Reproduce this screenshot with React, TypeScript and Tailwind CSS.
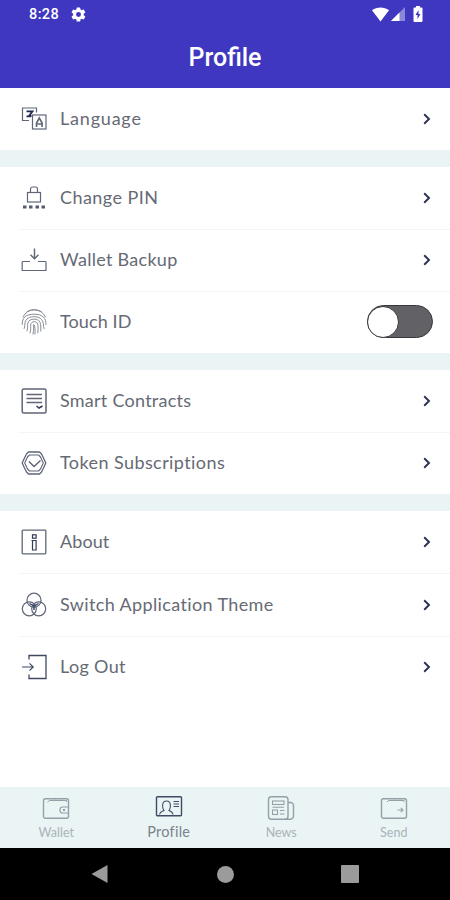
import type { ReactNode } from 'react';

type IconProps = { className?: string; children?: ReactNode };

function Icon({ className, children }: IconProps) {
  return (
    <svg
      xmlns="http://www.w3.org/2000/svg"
      viewBox="0 0 26 26"
      fill="none"
      stroke="currentColor"
      strokeWidth={1.2}
      className={className ?? 'h-[26px] w-[26px] flex-none text-[#5f6677]'}
    >
      {children}
    </svg>
  );
}

function IconLanguage() {
  return (
    <Icon>
      <path d="M8 14.500H1.500V2H15.500V6.500M5 14.500h3" />
      <rect x="11.5" y="9" width="13.5" height="14" />
      <path d="M5.500 5.300h6l-3.700 5M5.500 10.300h2.300l2.700-.3" stroke="#1f2850" strokeWidth={1.8} />
      <path d="M15.500 21v-4l2.800-5 2.800 5v4M15.500 18h5.500" strokeWidth={1.6} />
    </Icon>
  );
}

function IconPin() {
  return (
    <Icon>
      <rect x="6.5" y="7.5" width="13" height="9.5" />
      <path d="M9.500 7.500V4a2 2 0 0 1 2-2h3a2 2 0 0 1 2 2v3.500" />
      <path d="M2 22h3.500M8 22h3.500M14.500 22H18M20.500 22H24" stroke="#555b6a" strokeWidth={3} />
    </Icon>
  );
}

function IconBackup() {
  return (
    <Icon>
      <path d="M9 14.500H2a.8.8 0 0 0-.8.8v8.200h23.800v-8.200a.8.8 0 0 0-.8-.8H17" />
      <path d="M13.500 1.500v10M9.500 7.700l4 4 4-4" strokeWidth={1.4} />
    </Icon>
  );
}

function IconTouch() {
  return (
    <Icon className="h-[26px] w-[26px] flex-none text-[#878c96]">
      <g strokeWidth={1} strokeLinecap="round">
        <path d="M6 2.700a14 14 0 0 1 14.500 0" />
        <path d="M2 8a12.500 12.500 0 0 1 22.500 0" />
        <path d="M1.200 15.500C1 8.500 5 5.200 13.200 5.200S25.300 9 25 15.500" />
        <path d="M3.200 19.500c1-2 .4-4 .8-6 .9-3.800 4.300-5.800 9.200-5.800s8.500 2.500 9.100 7c.2 2 .2 3.500.8 5" />
        <path d="M6 22c1.200-3 .3-5.500.8-8 .6-2.500 3.200-3.900 6.400-3.900 3.800 0 6.100 2 6.400 5.500.2 2.500.4 4.500.2 6.500" />
        <path d="M9 24c1.200-3 .5-6 .7-8.200.2-1.900 1.600-3.100 3.500-3.100 2.300 0 3.700 1.500 3.800 3.800.1 2.700.2 5-.2 7.300" />
        <path d="M12 25c.9-3.500.5-6 .7-9.500 1.600 2 1.500 6 1.200 9.500" />
      </g>
    </Icon>
  );
}

function IconContract() {
  return (
    <Icon>
      <rect x="1.200" y="1" width="23.800" height="24" rx="1.500" strokeWidth={1.5} />
      <path d="M5.500 6.500h15.500M5.500 10.500h15.500M5.500 14.500h15.500" strokeWidth={1.5} />
      <path d="M15.500 18l2.500 2 3.500-2" stroke="#353c50" strokeWidth={1.6} />
    </Icon>
  );
}

function IconToken() {
  return (
    <Icon>
      <g strokeLinejoin="round">
        <path d="M7.500 2h11l2 2 2 4 2.300 5-2.300 5-2 4-2 2h-11l-2-2-2-4-2.300-5 2.300-5 2-4z" strokeWidth={1.3} />
        <path d="M8.500 5h9l2 2 2.800 6-2.800 6-2 2h-9l-2-2-2.800-6 2.800-6z" strokeWidth={1.1} />
      </g>
      <path d="M8 11.500l5 5 6.500-6" strokeWidth={1.5} />
    </Icon>
  );
}

function IconAbout() {
  return (
    <Icon>
      <rect x="1.200" y="1.200" width="23.600" height="23.600" rx="0.800" strokeWidth={1.3} />
      <g stroke="#333b55">
        <rect x="11.500" y="5.800" width="3.600" height="3.400" />
        <path d="M10.500 11.500h4.600v9.500h-3.600v-9.500" />
      </g>
    </Icon>
  );
}

function IconTheme() {
  return (
    <Icon>
      <circle cx="13" cy="8.200" r="7" />
      <circle cx="8.300" cy="16.800" r="7" />
      <circle cx="17.700" cy="16.800" r="7" />
      <path d="M8.500 11.500L13 14l4.500-2.500M13 14v4" stroke="#35406b" strokeWidth={1.4} />
    </Icon>
  );
}

function IconLogout() {
  return (
    <Icon className="h-[26px] w-[26px] flex-none text-[#414961]">
      <path d="M8 5.500V1.500h17v23H8v-4" strokeWidth={1.3} />
      <path d="M1 13h11M8.500 9.300l3.700 3.700-3.700 3.700" />
    </Icon>
  );
}

function Chevron() {
  return (
    <svg viewBox="0 0 10 14" fill="none" className="mr-px h-3.5 w-2.5 flex-none">
      <path d="M2.200 2.300L7 7l-4.800 4.700" stroke="#2a3052" strokeWidth={1.9} />
    </svg>
  );
}

type Item = { label: string; icon: ReactNode; tracking: string; toggle?: boolean };

const groups: Item[][] = [
  [{ label: 'Language', icon: <IconLanguage />, tracking: 'tracking-[0.8px]' }],
  [
    { label: 'Change PIN', icon: <IconPin />, tracking: 'tracking-[0.45px]' },
    { label: 'Wallet Backup', icon: <IconBackup />, tracking: 'tracking-[0.28px]' },
    { label: 'Touch ID', icon: <IconTouch />, tracking: 'tracking-[0.1px]', toggle: true },
  ],
  [
    { label: 'Smart Contracts', icon: <IconContract />, tracking: 'tracking-[0.25px]' },
    { label: 'Token Subscriptions', icon: <IconToken />, tracking: 'tracking-[0.42px]' },
  ],
  [
    { label: 'About', icon: <IconAbout />, tracking: 'tracking-[0.1px]' },
    { label: 'Switch Application Theme', icon: <IconTheme />, tracking: 'tracking-[0.37px]' },
    { label: 'Log Out', icon: <IconLogout />, tracking: 'tracking-[0.35px]' },
  ],
];

function TabIcon({ children }: { children: ReactNode }) {
  return (
    <svg viewBox="0 0 28 26" fill="none" stroke="currentColor" strokeWidth={1.4} className="h-[26px] w-7">
      {children}
    </svg>
  );
}

const tabs = [
  {
    label: 'Wallet',
    active: false,
    icon: (
      <TabIcon>
        <rect x="1.500" y="4.800" width="25" height="19.500" rx="2" />
        <path d="M5.500 8l2-1.500h17V8M13 5.500v1.500M20 5.500v1.500" strokeWidth={1} />
        <path d="M26.500 13h-6a2.500 2.500 0 0 0-2.500 2.500v1a2.500 2.500 0 0 0 2.500 2.500h6" strokeWidth={1.2} />
        <path d="M21 16h2" strokeWidth={1.8} />
      </TabIcon>
    ),
  },
  {
    label: 'Profile',
    active: true,
    icon: (
      <TabIcon>
        <rect x="1.500" y="2.700" width="25" height="19" rx="1" />
        <path
          d="M4.500 20.500c.5-3 2-3 4.500-4-2-2.500-2.500-9.500 2.500-9.500s4.500 7 2.500 9.500c2.500 1 3.500 1.500 4 4"
          strokeWidth={1.1}
        />
        <path d="M18.500 7.500h5.500M18.500 10h5.500M18.500 12.500h5.500" strokeWidth={1.1} />
      </TabIcon>
    ),
  },
  {
    label: 'News',
    active: false,
    icon: (
      <TabIcon>
        <rect x="1.500" y="2.700" width="19.500" height="22.500" rx="3" />
        <path d="M21 8.500h2.500a3 3 0 0 1 3 3v10.700a3 3 0 0 1-3 3H18" />
        <rect x="5.500" y="7" width="11.500" height="3.500" strokeWidth={1.1} />
        <rect x="5.500" y="16" width="5" height="4.500" strokeWidth={1.1} />
        <path d="M5.500 13.300H17M13 16.500h4.500M13 20h4.500" strokeWidth={1.1} />
      </TabIcon>
    ),
  },
  {
    label: 'Send',
    active: false,
    icon: (
      <TabIcon>
        <rect x="1.500" y="4.800" width="25" height="19.500" rx="2" />
        <path d="M7 8l1.500-1.500h15.500V8M14 5.500v1.500M20 5.500v1.500" strokeWidth={1} />
        <path d="M17.500 16h5.500M20.800 13.800l2.200 2.200-2.200 2.200" strokeWidth={1.1} />
      </TabIcon>
    ),
  },
];

export default function App() {
  return (
    <div className="flex h-[900px] w-[450px] flex-col overflow-hidden bg-white font-['Lato',sans-serif]">
      <header className="h-[87.5px] flex-none bg-[#3f37c0] text-white">
        <div className="flex h-7 items-center pr-[27px] pl-[29px]">
          <span className="mt-[2px] font-['Roboto',sans-serif] text-[14.5px] font-medium tracking-[0.4px]">
            8:28
          </span>
          <svg viewBox="0 0 24 24" fill="currentColor" className="ml-[11px] h-[17px] w-[17px]">
            <path d="M19.400 13a7.500 7.500 0 0 0 0-2l2.100-1.700a.5.5 0 0 0 .1-.6l-2-3.500a.5.5 0 0 0-.6-.2l-2.500 1a7.300 7.300 0 0 0-1.700-1L14.400 2.400a.5.5 0 0 0-.5-.4h-4a.5.500 0 0 0-.5.4L9 5a7.700 7.700 0 0 0-1.700 1l-2.500-1a.5.5 0 0 0-.6.2l-2 3.500a.5.5 0 0 0 .1.600L4.500 11a8 8 0 0 0 0 2l-2.200 1.700a.5.5 0 0 0-.1.600l2 3.500c.1.200.4.300.6.200l2.500-1a7.300 7.300 0 0 0 1.700 1l.4 2.600c0 .2.200.4.500.4h4c.3 0 .5-.2.500-.4l.4-2.600a7.700 7.700 0 0 0 1.700-1l2.500 1c.2.100.5 0 .6-.2l2-3.500a.5.5 0 0 0-.1-.6zM12 15.500a3.500 3.500 0 1 1 0-7 3.500 3.500 0 0 1 0 7z" />
          </svg>
          <div className="ml-auto flex items-center">
            <svg viewBox="0 0 17 15" fill="currentColor" className="h-[15px] w-[17px]">
              <path d="M0 3.200C5 -.5 12 -.5 17 3.200L8.500 14.500z" />
            </svg>
            <svg viewBox="0 0 14 14" fill="currentColor" className="ml-[2px] h-3.5 w-3.5">
              <path d="M14 0v14H0z" opacity={0.4} />
              <path d="M8.500 5.500V14H0z" />
            </svg>
            <svg viewBox="0 0 10 16" className="ml-2 h-4 w-2.5">
              <path
                d="M3 0h4v1.500h1.500a1 1 0 0 1 1 1V15a1 1 0 0 1-1 1h-7a1 1 0 0 1-1-1V2.500a1 1 0 0 1 1-1H3z"
                fill="#fff"
              />
              <path d="M5.500 4L2.500 9h2v4l3-5h-2z" fill="#3f37c0" />
            </svg>
          </div>
        </div>
        <h1 className="mt-[12px] text-center font-['Roboto',sans-serif] text-[25px] leading-9 font-medium">
          Profile
        </h1>
      </header>

      {/* Settings */}
      <main className="flex flex-none flex-col gap-[17px] bg-[#eaf4f5]">
        {groups.map((items) => (
          <section key={items[0].label} className="bg-white">
            {items.map((item, i) => (
              <div key={item.label} className="flex h-[62.15px] items-center pl-[21px]">
                {item.icon}
                <div className="relative flex h-full flex-1 items-center pr-[17px] pl-[13px]">
                  {i > 0 && <span className="absolute top-0 right-0 -left-[29px] h-px bg-[#f3f6f7]" />}
                  <span
                    className={`-mt-px text-[18px] whitespace-nowrap text-[#666a74] ${item.tracking}`}
                  >
                    {item.label}
                  </span>
                  <span className="ml-auto">
                    {item.toggle ? (
                      <span className="flex h-[33px] w-[66px] items-center rounded-full border-[1.5px] border-[#38383c] bg-[#626166]">
                        <span className="-ml-px h-[32px] w-[32px] rounded-full border-[1.5px] border-[#38383c] bg-white" />
                      </span>
                    ) : (
                      <Chevron />
                    )}
                  </span>
                </div>
              </div>
            ))}
          </section>
        ))}
      </main>

      {/* Bottom tabs */}
      <nav className="mt-auto flex h-[61px] flex-none bg-[#eaf4f5]">
        {tabs.map((tab) => (
          <div
            key={tab.label}
            className={`flex flex-1 flex-col items-center pt-[7px] ${
              tab.active ? 'text-[#3f4a66]' : 'text-[#93a0a8]'
            }`}
          >
            {tab.icon}
            <span
              className={
                tab.active
                  ? 'mt-[3px] text-[14.5px] leading-[18px] tracking-[0.25px] text-[#7b838c]'
                  : 'mt-[4px] text-[12.5px] leading-[18px] text-[#a9b3b8]'
              }
            >
              {tab.label}
            </span>
          </div>
        ))}
      </nav>

      {/* Android navigation */}
      <div className="flex h-[52px] flex-none items-center justify-between bg-black px-[91px] text-[#9b9b9b]">
        <svg viewBox="0 0 18 18" fill="currentColor" className="h-[18px] w-[18px]">
          <path d="M.5 9L16.500 0v18z" />
        </svg>
        <span className="h-[17px] w-[17px] rounded-full bg-[#9b9b9b]" />
        <span className="h-[18px] w-[18px] rounded-[1px] bg-[#9b9b9b]" />
      </div>
    </div>
  );
}
